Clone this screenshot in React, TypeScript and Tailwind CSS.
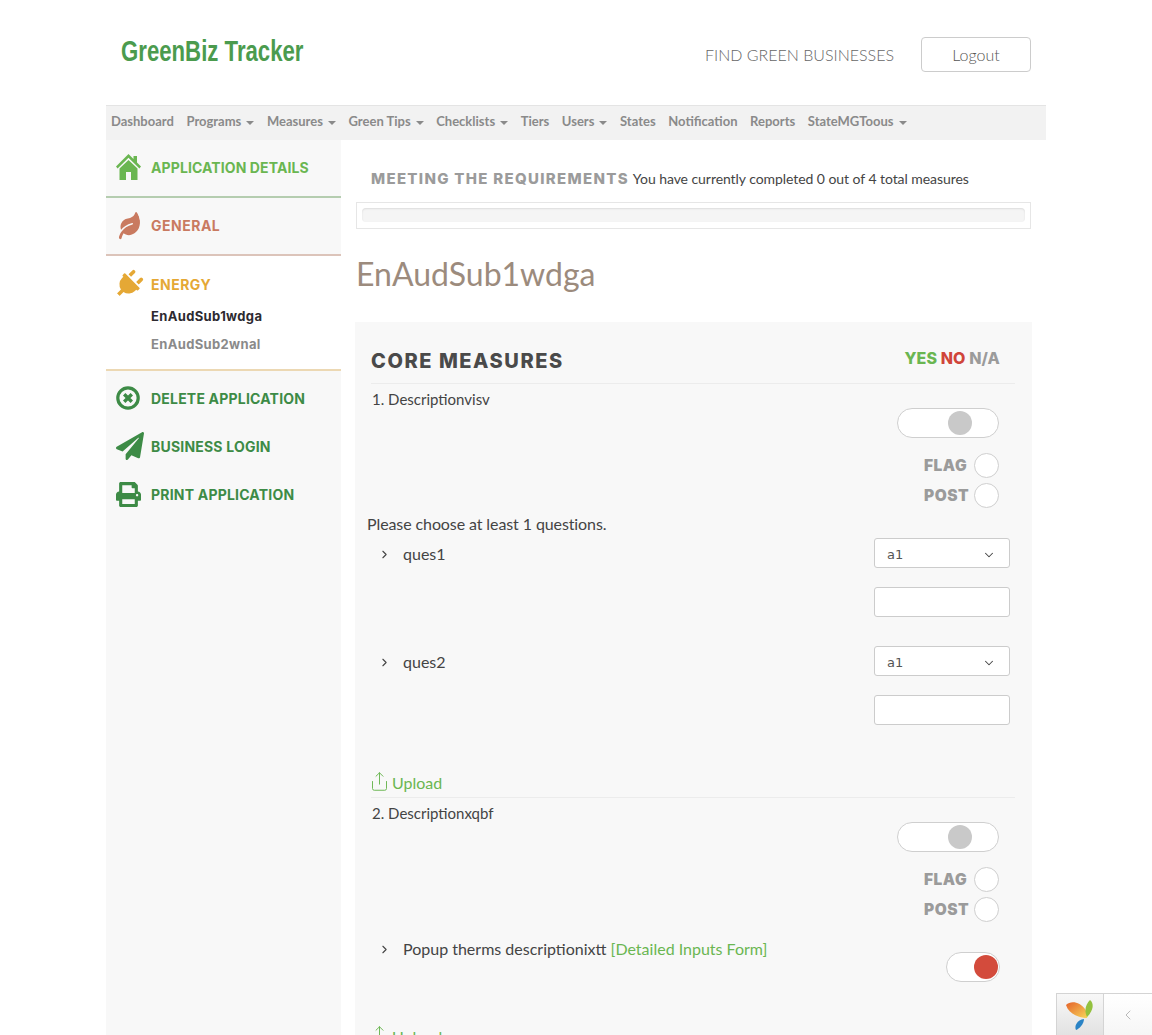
import React from 'react';
import { FaLeaf, FaPlug, FaPaperPlane, FaPrint } from 'react-icons/fa';
import { ChevronDown, ChevronLeft, ChevronRight, Share } from 'lucide-react';

const headFont = "font-['Inter','Open_Sans',sans-serif]";

const Caret = () => (
  <span className="ml-[5px] inline-block w-0 h-0 align-middle border-x-[4px] border-x-transparent border-t-[4px] border-t-[#8a8a8a]" />
);

const navItems: [string, boolean][] = [
  ['Dashboard', false],
  ['Programs', true],
  ['Measures', true],
  ['Green Tips', true],
  ['Checklists', true],
  ['Tiers', false],
  ['Users', true],
  ['States', false],
  ['Notification', false],
  ['Reports', false],
  ['StateMGToous', true],
];

const Toggle = ({ small, on }: { small?: boolean; on?: boolean }) => (
  <div className={`flex items-center h-[30px] rounded-full bg-white border border-[#cfcfcf] ${small ? 'w-[54px] justify-end pr-[1px]' : 'w-[102px] pl-[50px]'}`}>
    <div className={`w-[24px] h-[24px] rounded-full ${on ? 'bg-[#d34b3c]' : 'bg-[#c9c9c9]'}`} />
  </div>
);

const Check = ({ label, className }: { label: string; className?: string }) => (
  <div className={`flex items-center justify-end gap-[5px] h-[25px] mr-[16px] ${className ?? ''}`}>
    <span className={`${headFont} w-[45px] font-black text-[15.5px] tracking-[0.5px] text-[#9b9b9b] pt-[1px]`}>{label}</span>
    <div className="w-[25px] h-[25px] rounded-full bg-white border border-[#cfcfcf]" />
  </div>
);

const Question = ({ label }: { label: string }) => (
  <div className="flex justify-between mb-[29px]">
    <div className="flex items-center h-[32px] pl-[7px] text-[16px] text-[#444]">
      <ChevronRight size={13} strokeWidth={2} className="text-[#444] mr-[12px]" />
      {label}
    </div>
    <div className="w-[136px] mr-[5px]">
      <div className="flex items-center justify-between h-[30px] pl-[12px] pr-[13px] pt-[3px] bg-white border border-[#cccccc] rounded-[3px] font-['DejaVu_Sans',sans-serif] text-[13px] text-[#555]">
        a1
        <ChevronDown size={14} strokeWidth={1.8} className="text-[#444]" />
      </div>
      <div className="h-[30px] mt-[19px] bg-white border border-[#cccccc] rounded-[3px]" />
    </div>
  </div>
);

const Upload = () => (
  <div className="flex items-center text-[16px] text-[#6ab651] h-[20px]">
    <Share size={21} strokeWidth={1.1} className="mb-[4px] -ml-[2px] mr-[2px]" />
    Upload
  </div>
);

const SideLink = ({ icon, label }: { icon: React.ReactNode; label: string }) => (
  <div className="flex items-center h-[48px] pl-[10px]">
    <span className="w-[35px] flex justify-start text-[#3d8b46]">{icon}</span>
    <span className={`${headFont} font-bold text-[14px] tracking-[0.2px] text-[#3d8b46]`}>{label}</span>
  </div>
);

export default function App() {
  return (
    <div className="relative h-[1035px] overflow-hidden bg-white font-['Lato',sans-serif]">
      <div className="w-[940px] ml-[106px]">
        {/* header */}
        <div className="flex items-center justify-between h-[105px] pb-[1px] pl-[15px] pr-[15px]">
          <div className="font-['Liberation_Sans',sans-serif] font-bold text-[29px] text-[#4b9b4e] -mt-[1px] origin-left scale-x-[0.765] whitespace-nowrap">GreenBiz Tracker</div>
          <div className="flex items-center mt-[4px]">
            <span className="text-[16px] font-light text-[#666] mr-[27px] pt-[1px]">FIND GREEN BUSINESSES</span>
            <div className="flex items-center justify-center w-[110px] h-[35px] pt-[1px] border border-[#cccccc] rounded-[4px] text-[16px] font-light text-[#555]">Logout</div>
          </div>
        </div>

        {/* nav */}
        <div className="flex items-center h-[35px] pb-[2px] bg-[#f2f2f2] border-t border-[#e4e4e4] pl-[5px] text-[13px] font-bold text-[#8a8a8a] gap-[12.6px]">
          {navItems.map(([name, caret]) => (
            <span key={name} className="whitespace-nowrap">
              {name}
              {caret && <Caret />}
            </span>
          ))}
        </div>

        <div className="flex">
          {/* sidebar */}
          <div className="w-[235px] h-[895px] bg-[#f8f8f8] shrink-0">
            <div className="flex items-center h-[58px] pb-[2px] pl-[10px] border-b-2 border-[#b5cdb0]">
              <span className="w-[35px] text-[#6ab651]">
                <svg width="25" height="26" viewBox="0 0 25 26" fill="currentColor">
                  <path d="M12.5 0 L17.5 5 V2 H21 V8.5 L25 12.5 L23.4 14.4 L12.5 3.8 L1.6 14.4 L0 12.5Z" />
                  <path d="M12.5 6 L21.5 14.6 V26 H15 V18 H10 V26 H3.5 V14.6Z" />
                </svg>
              </span>
              <span className={`${headFont} font-bold text-[14px] tracking-[0.1px] text-[#6ab651]`}>APPLICATION DETAILS</span>
            </div>
            <div className="flex items-center h-[58px] pb-[2px] pl-[10px] border-b-2 border-[#dcc4ba]">
              <span className="w-[35px] text-[#c97a60]"><FaLeaf size={25} className="rotate-[-15deg]" /></span>
              <span className={`${headFont} font-bold text-[14px] tracking-[0.5px] text-[#c97a60]`}>GENERAL</span>
            </div>
            <div className="h-[115px] bg-white border-b-2 border-[#ecd8b3]">
              <div className="flex items-center h-[56px] pl-[10px]">
                <span className="w-[35px] text-[#e5a835]"><FaPlug size={29} className="rotate-45 -ml-[2px]" /></span>
                <span className={`${headFont} font-bold text-[14px] tracking-[0.5px] text-[#e5a835]`}>ENERGY</span>
              </div>
              <div className={`${headFont} pl-[45px] -mt-[10px] font-bold text-[13px] leading-[28px] tracking-[0.35px]`}>
                <div className="text-[#2d2a30]">EnAudSub1wdga</div>
                <div className="text-[#8a8a8a]">EnAudSub2wnal</div>
              </div>
            </div>
            <div className="pt-[3px]">
              <SideLink
                icon={
                  <svg width="24" height="24" viewBox="0 0 24 24" fill="none" stroke="currentColor">
                    <circle cx="12" cy="12" r="10.2" strokeWidth="3.2" />
                    <path d="M8.2 8.2 L15.8 15.8 M15.8 8.2 L8.2 15.8" strokeWidth="3.4" />
                  </svg>
                }
                label="DELETE APPLICATION"
              />
              <SideLink icon={<FaPaperPlane size={28} />} label="BUSINESS LOGIN" />
              <SideLink icon={<FaPrint size={25} />} label="PRINT APPLICATION" />
            </div>
          </div>

          {/* main */}
          <div className="flex-1 min-w-0 pl-[15px] pr-[15px]">
            <div className="flex items-center h-[62px] pl-[15px] pt-[15px]">
              <span className={`${headFont} font-extrabold text-[15px] tracking-[1.3px] text-[#9b9b9b] mr-[4px] pt-[1px]`}>MEETING THE REQUIREMENTS</span>
              <span className="text-[14px] tracking-[-0.06px] text-[#444]">You have currently completed 0 out of 4 total measures</span>
            </div>
            <div className="h-[27px] p-[5px] border border-[#e6e6e6]">
              <div className="h-[14px] bg-[#f5f5f5] rounded-[4px] shadow-[inset_0_1px_2px_rgba(0,0,0,0.1)]" />
            </div>
            <h1 className="mt-[22px] h-[46px] leading-[46px] text-[32px] text-[#9c8b7d]">EnAudSub1wdga</h1>
            <div className="-ml-[1px] -mr-[1px] mt-[25px] h-[800px] bg-[#f8f8f8] pl-[16px] pr-[17px]">
              <div className="flex items-center justify-between h-[62px] pt-[16px] border-b border-[#ececec]">
                <span className={`${headFont} font-extrabold text-[20px] tracking-[1.55px] text-[#4a4a4a]`}>CORE MEASURES</span>
                <span className={`${headFont} font-extrabold text-[16px] tracking-[0.1px] mr-[15px] mb-[6px]`}>
                  <span className="text-[#6ab651]">YES</span> <span className="text-[#d0453a]">NO</span> <span className="text-[#9b9b9b]">N/A</span>
                </span>
              </div>

              <div className="h-[24px] pt-[5px] pl-[1px] text-[15px] leading-[20px] text-[#444]">1. Descriptionvisv</div>
              <div className="flex justify-end mr-[16px]"><Toggle /></div>
              <Check label="FLAG" className="mt-[15px]" />
              <Check label="POST" className="mt-[5px]" />
              <div className="-ml-[4px] mt-[6px] mb-[4px] h-[20px] leading-[20px] text-[16px] tracking-[-0.1px] text-[#444]">Please choose at least 1 questions.</div>
              <Question label="ques1" />
              <Question label="ques2" />
              <div className="mt-[48px] pb-[4px] border-b border-[#ececec]"><Upload /></div>

              <div className="h-[24px] pt-[5px] pl-[1px] text-[15px] leading-[20px] text-[#444]">2. Descriptionxqbf</div>
              <div className="flex justify-end mr-[16px]"><Toggle /></div>
              <Check label="FLAG" className="mt-[15px]" />
              <Check label="POST" className="mt-[5px]" />
              <div className="flex justify-between mt-[13px]">
                <div className="flex items-center h-[28px] pl-[7px] text-[16px] text-[#444]">
                  <ChevronRight size={13} strokeWidth={2} className="text-[#444] mr-[12px]" />
                  <span>Popup therms descriptionixtt <span className="text-[#6ab651]">[Detailed Inputs Form]</span></span>
                </div>
                <div className="mt-[17px] mr-[15px]"><Toggle small on /></div>
              </div>
              <div className="mt-[45px]"><Upload /></div>
            </div>
          </div>
        </div>
      </div>

      {/* debug toolbar */}
      <div className="absolute right-0 bottom-0 flex w-[96px] h-[42px] border-t border-l border-[#d4d4d4] rounded-br-[3px]">
        <div className="flex items-center justify-center w-[47px] border-r border-[#d4d4d4] bg-gradient-to-b from-[#f8f8f8] to-[#e2e2e2]">
          <svg width="30" height="31" viewBox="0 0 30 31">
            <defs>
              <linearGradient id="yiiPetal" x1="0" y1="0" x2="1" y2="1">
                <stop offset="0" stopColor="#e5622a" />
                <stop offset="1" stopColor="#f7d65a" />
              </linearGradient>
            </defs>
            <path d="M1 6 C6 1 15 3 20 10 C22 13 23 16 22 19 C16 19 4 16 1 6Z" fill="url(#yiiPetal)" />
            <path d="M25 1 C29 4 29 11 22 18 C20 14 19 7 25 1Z" fill="#93c13e" />
            <path d="M19 20 C19 25 14 30 11 31 C9 27 12 21 19 20Z" fill="#2a83c5" />
          </svg>
        </div>
        <div className="flex-1 flex items-center justify-center bg-gradient-to-b from-white to-[#f6f6f6]">
          <ChevronLeft size={16} strokeWidth={1} className="text-[#999]" />
        </div>
      </div>
    </div>
  );
}
